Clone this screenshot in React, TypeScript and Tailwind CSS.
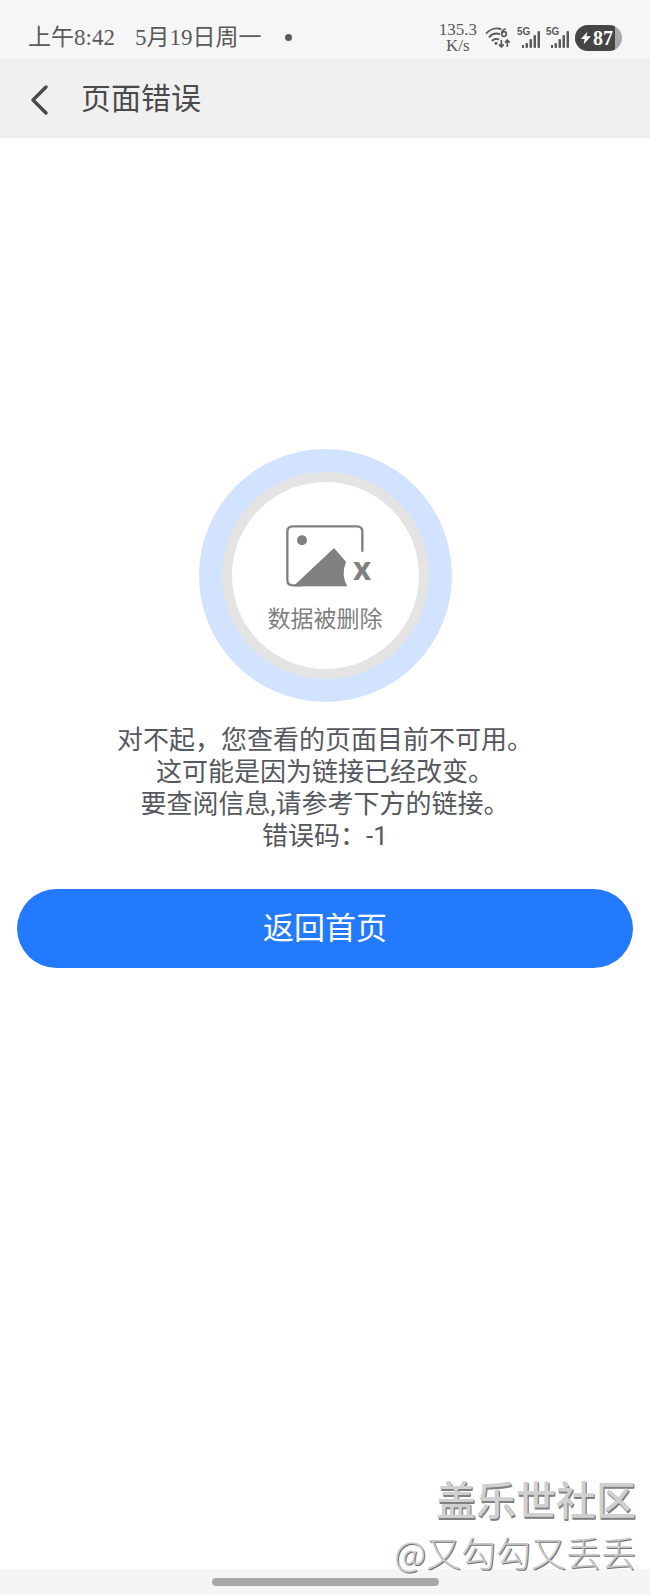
/**
 * Props for the mobile signal indicator
 */
interface SignalProps {
  label: string;
}

const MESSAGE_LINES = [
  '对不起，您查看的页面目前不可用。',
  '这可能是因为链接已经改变。',
  '要查阅信息,请参考下方的链接。',
  '错误码：-1',
];

function WifiIcon() {
  return (
    <svg width="26" height="22" viewBox="0 0 78 66" fill="none" stroke="#5a5a5a" aria-hidden="true">
      <path d="M3 20C16 5 34 1 49 7" strokeWidth="6" />
      <path d="M12 31C22 20 35 18 45 22" strokeWidth="6" />
      <path d="M21 42C27 35 36 34 42 38" strokeWidth="6" />
      <path d="M27 48l6-4 6 4-6 7z" fill="#5a5a5a" stroke="none" />
      <path d="M62 5C53 8 50 15 50 21" strokeWidth="5" />
      <circle cx="57" cy="21" r="7" strokeWidth="5" />
      <path d="M49 39v20M42 52l7 8 7-8M67 60V40M60 47l7-8 7 8" strokeWidth="5" />
    </svg>
  );
}

function Signal({ label }: SignalProps) {
  return (
    <div className="flex items-start">
      <span className="w-3 font-['Liberation_Sans'] text-[10px] leading-[10px] font-bold">
        {label}
      </span>
      <svg className="-ml-2 mt-1" width="19" height="18" viewBox="0 0 19 18" fill="#5a5a5a" aria-hidden="true">
        <rect x="1" y="14" width="2" height="3" />
        <rect x="4.5" y="12" width="2.5" height="5" rx="1" />
        <rect x="8.5" y="8" width="2.5" height="9" rx="1" />
        <rect x="12.5" y="4" width="2.5" height="13" rx="1" />
        <rect x="16.5" y="0" width="2.5" height="17" rx="1" />
      </svg>
    </div>
  );
}

function Battery() {
  return (
    <div className="flex h-[26px] w-[47px] items-center overflow-hidden rounded-full bg-[#a8a8a8]">
      <div className="flex h-full w-10 items-center bg-[#454545] pl-1.5 text-white">
        <svg width="10" height="14" viewBox="0 0 11 14" fill="currentColor" aria-hidden="true">
          <path d="M7 0L0 8h4l-1 6 8-9H6z" />
        </svg>
        <span className="ml-0.5 text-[20px] leading-[26px] font-bold">87</span>
      </div>
    </div>
  );
}

function StatusBar() {
  return (
    <div className="flex h-[59px] items-center justify-between bg-[#f6f6f6] pt-4 pr-7 pl-7 font-['Liberation_Serif','Noto_Sans_CJK_SC',serif] text-[#5a5a5a]">
      <div className="flex items-center text-[23px] leading-7">
        <span>上午8:42</span>
        <span className="ml-5">5月19日周一</span>
        <span className="ml-6 size-[7px] rounded-full bg-[#5a5a5a]" />
      </div>
      <div className="flex items-center">
        <div className="text-center text-[17px] leading-4">
          <div>135.3</div>
          <div>K/s</div>
        </div>
        <div className="ml-2 flex items-center gap-1.5">
          <WifiIcon />
          <Signal label="5G" />
          <Signal label="5G" />
          <Battery />
        </div>
      </div>
    </div>
  );
}

function Header() {
  return (
    <header className="flex h-[79px] items-center bg-[#f0f0f0] pl-[30px] text-[#4a4a4a]">
      <button type="button" aria-label="返回">
        <svg width="20" height="32" viewBox="0 0 20 32" fill="none" stroke="currentColor" strokeWidth="3.4" strokeLinecap="round" strokeLinejoin="round">
          <path d="M16 4L3 17l13 13" />
        </svg>
      </button>
      <h1 className="ml-[31px] text-[30px] leading-10">页面错误</h1>
    </header>
  );
}

function DeletedBadge() {
  return (
    <div className="flex size-[253px] items-center justify-center rounded-full bg-[#d2e3ff]">
      <div className="flex size-[207px] flex-col items-center rounded-full border-10 border-[#e4e4e4] bg-white pt-[43px] text-[#808080]">
        <svg className="ml-2 overflow-visible" width="86" height="62" viewBox="0 0 258 186" fill="none" aria-hidden="true">
          <path d="M229 80V20Q229 4 213 4H20Q4 4 4 20V165Q4 181 20 181H50" stroke="currentColor" strokeWidth="7" />
          <circle cx="48" cy="46" r="15" fill="currentColor" />
          <path d="M22 184L144 69L180 110Q164 150 184 184Z" fill="currentColor" />
          <text x="201" y="165" fill="currentColor" fontFamily="Open Sans" fontWeight="700" fontSize="94">x</text>
        </svg>
        <p className="mt-[17px] text-[23px] leading-8">数据被删除</p>
      </div>
    </div>
  );
}

export default function App() {
  return (
    <div className="relative flex min-h-screen flex-col bg-white font-['Roboto','Noto_Sans_CJK_SC',sans-serif]">
      <StatusBar />
      <Header />

      <main className="flex flex-1 flex-col items-center px-[17px] pt-[311px]">
        <DeletedBadge />
        <div className="mt-[22px] text-center text-[26px] leading-8 text-[#55585e]">
          {MESSAGE_LINES.map((line) => (
            <p key={line}>{line}</p>
          ))}
        </div>
        <button type="button" className="mt-[37px] h-[79px] w-full rounded-full bg-[#247aff] pt-0.5 text-[31px] text-white">
          返回首页
        </button>
      </main>

      {/* Gesture bar */}
      <footer className="flex h-[26px] items-center justify-center bg-[#f5f5f5]">
        <div className="h-2 w-[227px] rounded-full bg-[#a8a8a8]" />
      </footer>

      {/* Community watermark */}
      <div className="pointer-events-none absolute right-3.5 bottom-4 text-right font-['Noto_Sans_CJK_SC',sans-serif]">
        <p className="text-[40px] leading-[54px] font-medium text-[#d0d0d0] [text-shadow:1px_1px_0_#808080,1px_2px_0_#808080]">
          盖乐世社区
        </p>
        <p className="text-[35px] leading-[54px] font-light text-[#c8c8c8] [text-shadow:1px_1px_0_#707070]">
          @又勾勾又丢丢
        </p>
      </div>
    </div>
  );
}
